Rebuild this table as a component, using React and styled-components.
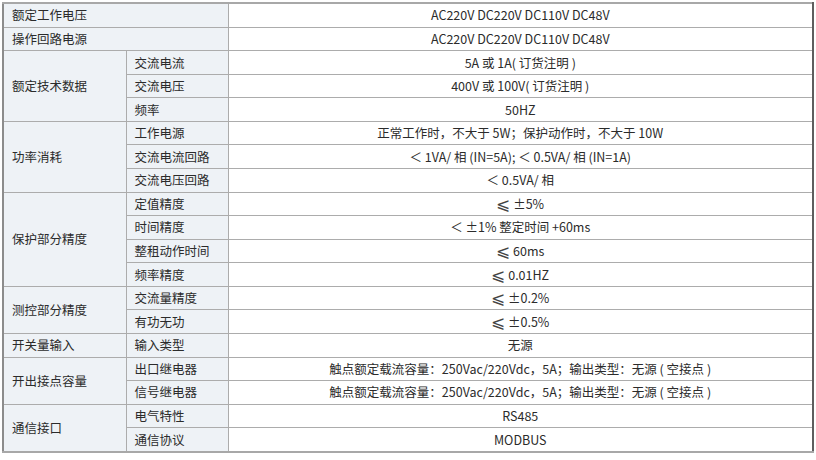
import React from "react";
import styled, { createGlobalStyle } from "styled-components";

const GlobalStyle = createGlobalStyle`
  body {
    margin: 0;
    background: #ffffff;
    font-family: "Noto Sans CJK SC", "Noto Sans", sans-serif;
  }
`;

const Page = styled.div`
  padding: 2px 2px 0 2px;
  width: 812px;
`;

const Table = styled.table`
  width: 812px;
  height: 451px;
  border-collapse: collapse;
  table-layout: fixed;
  border-top: 2px solid #a8a8a8;
  border-bottom: 2px solid #a8a8a8;
  border-left: 2px solid #8c8c8c;
  border-right: 2px solid #5e5e5e;
  font-size: 12.5px;
  color: #2b2b2b;
`;

const Cell = styled.td`
  border: 1px solid #acacac;
  padding: 0 8px;
  line-height: 18px;
  white-space: nowrap;
  background: ${(p) => (p.$label ? "#eef2f6" : "#ffffff")};
  text-align: ${(p) => (p.$label ? "left" : "center")};
`;

const Sym = styled.span`
  font-family: "DejaVu Sans", sans-serif;
  font-size: 17px;
  line-height: 14px;
  font-weight: 300;
  color: #444;
  vertical-align: -1px;
`;

const le = <Sym>⩽</Sym>;

const rows = [
  { group: "额定工作电压", span: 1, full: true, value: "AC220V DC220V DC110V DC48V" },
  { group: "操作回路电源", span: 1, full: true, value: "AC220V DC220V DC110V DC48V" },
  { group: "额定技术数据", span: 3, item: "交流电流", value: "5A 或 1A( 订货注明 )" },
  { item: "交流电压", value: "400V 或 100V( 订货注明 )" },
  { item: "频率", value: "50HZ" },
  { group: "功率消耗", span: 3, item: "工作电源", value: "正常工作时，不大于 5W；保护动作时，不大于 10W" },
  { item: "交流电流回路", value: "＜ 1VA/ 相 (IN=5A); ＜ 0.5VA/ 相 (IN=1A)" },
  { item: "交流电压回路", value: "＜ 0.5VA/ 相" },
  { group: "保护部分精度", span: 4, item: "定值精度", value: <>{le} ±5%</> },
  { item: "时间精度", value: "＜ ±1% 整定时间 +60ms" },
  { item: "整租动作时间", value: <>{le} 60ms</> },
  { item: "频率精度", value: <>{le} 0.01HZ</> },
  { group: "测控部分精度", span: 2, item: "交流量精度", value: <>{le} ±0.2%</> },
  { item: "有功无功", value: <>{le} ±0.5%</> },
  { group: "开关量输入", span: 1, item: "输入类型", value: "无源" },
  { group: "开出接点容量", span: 2, item: "出口继电器", value: "触点额定载流容量：250Vac/220Vdc，5A；输出类型：无源 ( 空接点 )" },
  { item: "信号继电器", value: "触点额定载流容量：250Vac/220Vdc，5A；输出类型：无源 ( 空接点 )" },
  { group: "通信接口", span: 2, item: "电气特性", value: "RS485" },
  { item: "通信协议", value: "MODBUS" },
];

export default function App() {
  return (
    <Page>
      <GlobalStyle />
      <Table>
        <colgroup>
          <col style={{ width: "123px" }} />
          <col style={{ width: "102px" }} />
          <col />
        </colgroup>
        <tbody>
          {rows.map((r, i) => (
            <tr key={i}>
              {r.group && (
                <Cell $label rowSpan={r.span} colSpan={r.full ? 2 : 1}>
                  {r.group}
                </Cell>
              )}
              {!r.full && <Cell $label>{r.item}</Cell>}
              <Cell>{r.value}</Cell>
            </tr>
          ))}
        </tbody>
      </Table>
    </Page>
  );
}
